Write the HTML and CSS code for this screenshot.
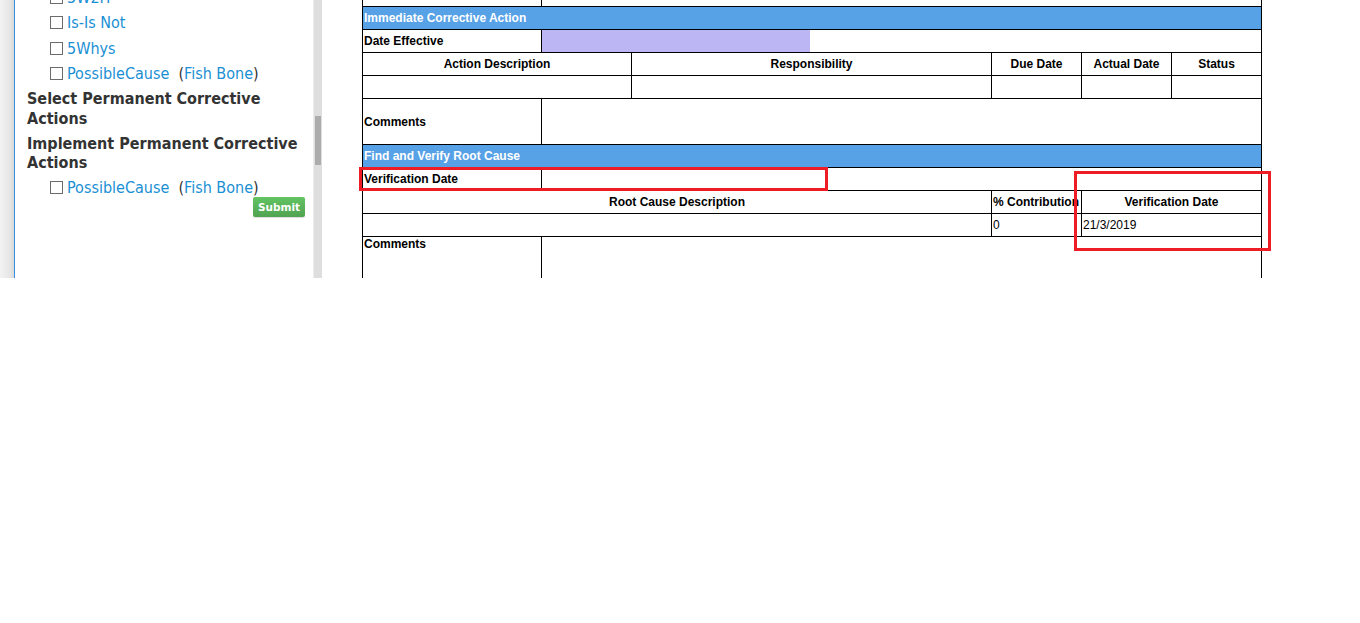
FILE: index.html
```html
<!DOCTYPE html>
<html>
<head>
<meta charset="utf-8">
<link rel="stylesheet" href="styles.css">
</head>
<body>
<div class="viewport">
  <div class="shade"></div>
  <div class="panel">
    <div class="panel-inner">
      <div class="item"><span class="cb"></span><a class="lnk">5W2H</a></div>
      <div class="item"><span class="cb"></span><a class="lnk">Is-Is Not</a></div>
      <div class="item"><span class="cb"></span><a class="lnk">5Whys</a></div>
      <div class="item"><span class="cb"></span><a class="lnk">PossibleCause</a>&nbsp; (<a class="lnk">Fish Bone</a>)</div>
      <div class="heading">Select Permanent Corrective Actions</div>
      <div class="heading heading2">Implement Permanent Corrective Actions</div>
      <div class="item"><span class="cb"></span><a class="lnk">PossibleCause</a>&nbsp; (<a class="lnk">Fish Bone</a>)</div>
      <div class="btn-row"><span class="btn">Submit</span></div>
    </div>
    <div class="scrollbar"><div class="thumb"></div></div>
  </div>
  <div class="main">
    <table class="grid">
      <colgroup>
        <col class="c1"><col class="c2"><col class="c3"><col class="c4"><col class="c5"><col class="c6">
      </colgroup>
      <tr class="r"><td></td><td colspan="5"></td></tr>
      <tr class="r band"><td colspan="6">Immediate Corrective Action</td></tr>
      <tr class="r"><td class="lbl">Date Effective</td><td colspan="5" class="inp-cell"><div class="inp"></div></td></tr>
      <tr class="r hd"><td colspan="2">Action Description</td><td>Responsibility</td><td>Due Date</td><td>Actual Date</td><td>Status</td></tr>
      <tr class="r"><td colspan="2"></td><td></td><td></td><td></td><td></td></tr>
      <tr class="tall"><td class="lbl">Comments</td><td colspan="5"></td></tr>
      <tr class="r band"><td colspan="6">Find and Verify Root Cause</td></tr>
      <tr class="r"><td class="lbl">Verification Date</td><td colspan="5"></td></tr>
      <tr class="r hd"><td colspan="3">Root Cause Description</td><td class="left">% Contribution</td><td colspan="2">Verification Date</td></tr>
      <tr class="r data"><td colspan="3"></td><td>0</td><td colspan="2">21/3/2019</td></tr>
      <tr class="tall2"><td class="lbl top">Comments</td><td colspan="5"></td></tr>
    </table>
    <div class="mark mark1"></div>
    <div class="mark mark2"></div>
  </div>
</div>
</body>
</html>
```
FILE: styles.css
```css
html, body {
  margin: 0;
  padding: 0;
  background: #fff;
}
.viewport {
  height: 278px;
  overflow: hidden;
  display: flex;
  position: relative;
}
.shade {
  width: 14px;
  flex: none;
  background: linear-gradient(to right, #f3f3f3, #e6e6e6 70%, #d9d9d9);
}
.panel {
  width: 307px;
  flex: none;
  border-left: 1px solid #3a8ee0;
  display: flex;
  background: #fff;
}
.panel-inner {
  width: 298px;
  flex: none;
  padding-left: 12px;
  box-sizing: border-box;
  margin-top: -15.5px;
  font-family: "DejaVu Sans Condensed", "DejaVu Sans", sans-serif;
  font-stretch: condensed;
  font-size: 16px;
  color: #333;
}
.item {
  height: 25.5px;
  line-height: 25.5px;
  padding-left: 23px;
  white-space: nowrap;
  display: flex;
  align-items: center;
}
.cb {
  width: 11px;
  height: 11px;
  border: 1px solid #6b6b6b;
  margin-right: 4px;
  flex: none;
  background: #fff;
}
.lnk {
  color: #1a8fd4;
  text-decoration: none;
}
.heading {
  font-weight: bold;
  line-height: 20px;
  margin-top: 2px;
  font-size: 16px;
}
.heading2 {
  margin-top: 5px;
  line-height: 19.5px;
}
.heading2 + .item {
  margin-top: 2px;
}
.btn-row {
  display: flex;
  justify-content: flex-end;
  margin-top: -3px;
  padding-right: 8px;
}
.btn {
  display: block;
  width: 52px;
  height: 20px;
  line-height: 20px;
  text-align: center;
  font-family: "DejaVu Sans", sans-serif;
  font-stretch: normal;
  font-weight: bold;
  font-size: 10.5px;
  color: #fff;
  background: linear-gradient(#62c462, #51a351);
  border-radius: 2px;
  box-shadow: 0 1px 1px rgba(0,0,0,0.15);
}
.scrollbar {
  width: 8px;
  flex: none;
  background: #dedede;
  border-left: 1px solid #ececec;
  position: relative;
}
.thumb {
  position: absolute;
  left: 1px;
  width: 6px;
  top: 116px;
  height: 49px;
  background: #acacac;
}
.main {
  flex: 1;
  padding-left: 40px;
  position: relative;
}
.grid {
  border-collapse: collapse;
  table-layout: fixed;
  width: 900px;
  margin-top: -17px;
  font-family: "Liberation Sans", Arial, sans-serif;
  font-size: 12px;
  color: #000;
}
.c1 { width: 179px; }
.c2 { width: 90px; }
.c3 { width: 360px; }
.c4 { width: 90px; }
.c5 { width: 90px; }
.c6 { width: 90px; }
.grid td {
  border: 1px solid #000;
  padding: 0 1px;
  height: 22px;
  box-sizing: border-box;
  white-space: nowrap;
  overflow: hidden;
}
.grid tr.r td { height: 23px; }
.grid tr.tall td { height: 46px; }
.grid tr.tall2 td { height: 60px; }
.band td {
  background: #57a1e6;
  color: #fff;
  font-weight: bold;
}
.lbl { font-weight: bold; }
.top { vertical-align: top; }
.hd td {
  font-weight: bold;
  text-align: center;
}
.hd td.left { text-align: left; }
.inp-cell { padding: 0 !important; }
.inp {
  width: 268px;
  height: 22px;
  background: #bcb6f5;
}
.mark {
  position: absolute;
  border: 3px solid #ee1c25;
  box-sizing: border-box;
}
.mark1 {
  left: 37px;
  top: 167px;
  width: 469px;
  height: 24px;
}
.mark2 {
  left: 752px;
  top: 171px;
  width: 197px;
  height: 80px;
}
```
